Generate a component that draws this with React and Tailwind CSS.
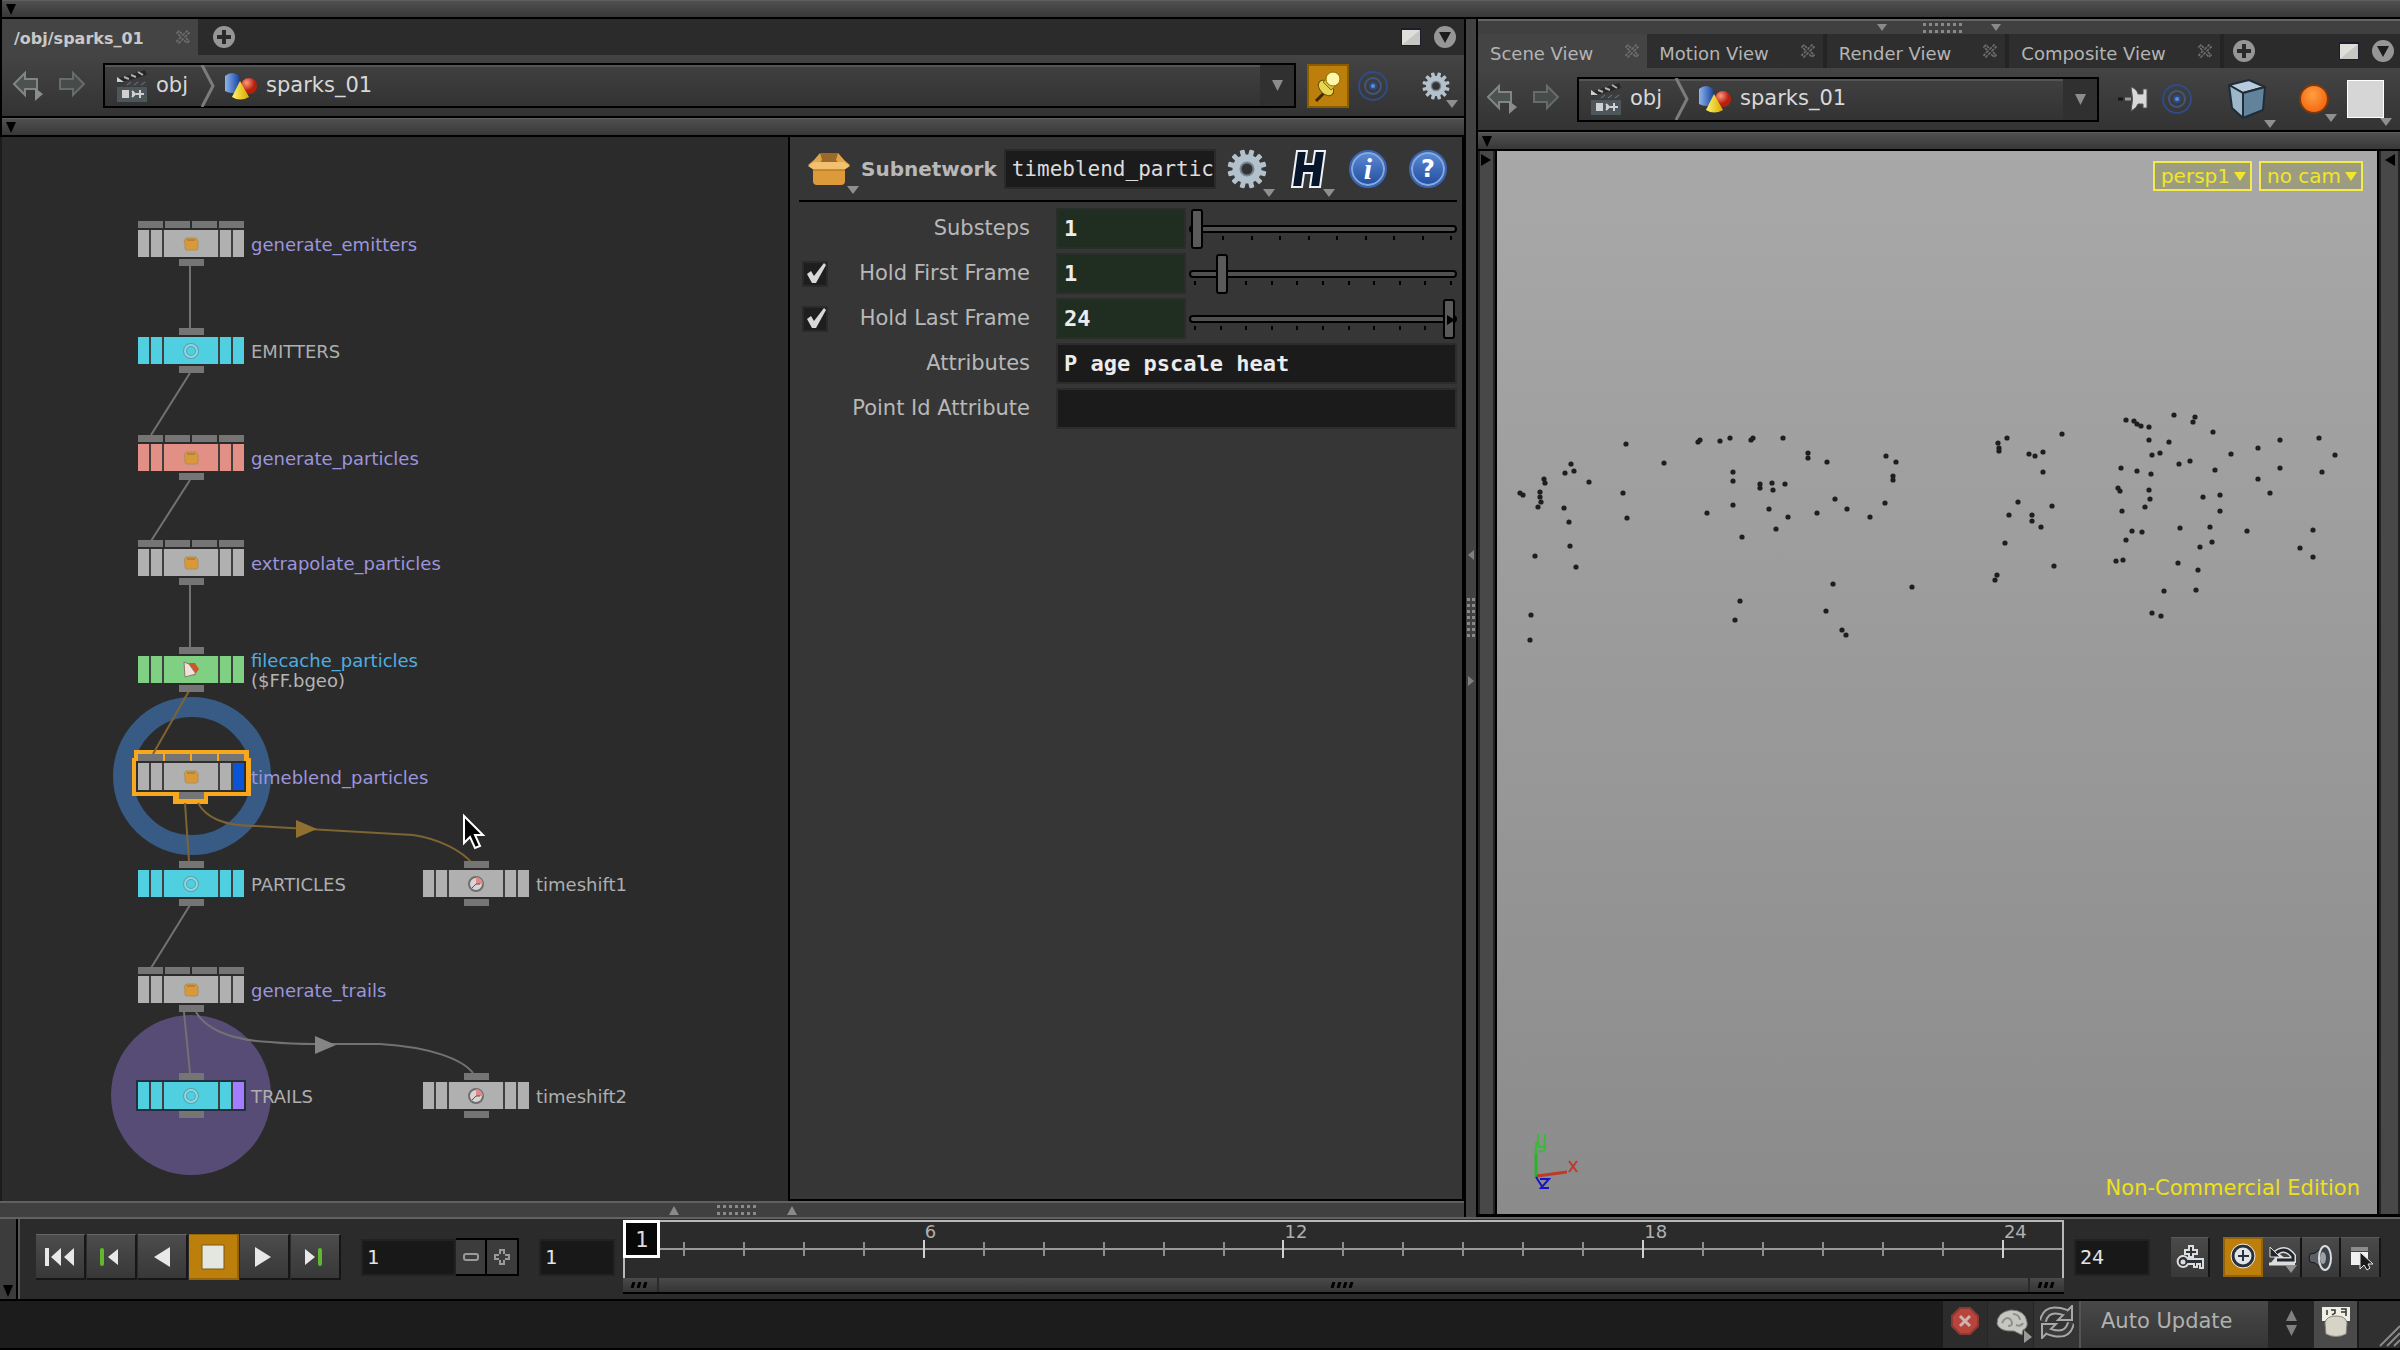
import { useState } from "react";
import clsx from "clsx";

const GRAY = "bg-[#b0b0b0]";
const CYAN = "bg-[#4fcfdf]";
const PINK = "bg-[#e28f85]";
const GREEN = "bg-[#7fd083]";

const PURPLE_TEXT = "text-[#9c95dc]";
const PLAIN_TEXT = "text-[#aeaeae]";

// x / y is the top left corner of a node on the network canvas
const nodes = [
  { name: "generate_emitters", x: 138, y: 84, inputs: 4, color: GRAY, icon: "box", text: PURPLE_TEXT },
  { name: "EMITTERS", x: 138, y: 191, inputs: 1, color: CYAN, icon: "null", text: PLAIN_TEXT },
  { name: "generate_particles", x: 138, y: 298, inputs: 4, color: PINK, icon: "box", text: PURPLE_TEXT },
  { name: "extrapolate_particles", x: 138, y: 403, inputs: 4, color: GRAY, icon: "box", text: PURPLE_TEXT },
  { name: "filecache_particles", x: 138, y: 510, inputs: 1, color: GREEN, icon: "file", text: "text-[#4fade0]", note: "($FF.bgeo)" },
  { name: "timeblend_particles", x: 138, y: 617, inputs: 4, color: GRAY, icon: "box", text: PURPLE_TEXT, flag: "bg-[#0a54d8]" },
  { name: "PARTICLES", x: 138, y: 724, inputs: 1, color: CYAN, icon: "null", text: PLAIN_TEXT },
  { name: "timeshift1", x: 423, y: 724, inputs: 1, color: GRAY, icon: "clock", text: PLAIN_TEXT },
  { name: "generate_trails", x: 138, y: 830, inputs: 4, color: GRAY, icon: "box", text: PURPLE_TEXT },
  { name: "TRAILS", x: 138, y: 936, inputs: 1, color: CYAN, icon: "null", text: PLAIN_TEXT, flag: "bg-[#a47cff]" },
  { name: "timeshift2", x: 423, y: 936, inputs: 1, color: GRAY, icon: "clock", text: PLAIN_TEXT },
];

const points = [
  [129, 293], [167, 312], [74, 313], [77, 320], [68, 322], [92, 331], [47, 328], [48, 332], [43, 341], [43, 346],
  [44, 351], [41, 356], [26, 344], [23, 342], [67, 357], [72, 371], [73, 395], [79, 416], [38, 405], [34, 464],
  [33, 489], [126, 342], [130, 367], [201, 291], [203, 289], [223, 290], [233, 287], [254, 289], [256, 287], [286, 287],
  [311, 302], [311, 307], [330, 311], [389, 305], [399, 311], [396, 325], [396, 329], [236, 321], [236, 330], [263, 333],
  [263, 337], [275, 332], [276, 339], [288, 333], [338, 348], [350, 358], [388, 352], [373, 366], [320, 362], [272, 358],
  [291, 366], [279, 378], [236, 354], [210, 362], [245, 386], [336, 433], [415, 436], [243, 450], [238, 469], [329, 460],
  [345, 479], [349, 484], [629, 269], [637, 270], [640, 273], [644, 275], [652, 276], [677, 264], [698, 266], [696, 271],
  [716, 281], [652, 289], [672, 291], [655, 304], [663, 302], [565, 283], [510, 287], [501, 292], [502, 297], [502, 300],
  [532, 303], [538, 305], [546, 301], [546, 321], [734, 303], [761, 297], [783, 289], [822, 287], [838, 304], [825, 321],
  [783, 317], [761, 328], [773, 342], [682, 313], [693, 310], [718, 319], [624, 317], [640, 320], [654, 323], [621, 337],
  [623, 340], [652, 339], [653, 348], [648, 356], [625, 360], [706, 346], [723, 344], [723, 360], [713, 376], [715, 391],
  [703, 396], [683, 377], [750, 380], [816, 379], [803, 397], [816, 406], [635, 380], [645, 381], [629, 389], [619, 410],
  [626, 409], [681, 412], [701, 419], [667, 440], [699, 439], [655, 462], [664, 465], [521, 351], [512, 364], [535, 364],
  [535, 370], [544, 376], [555, 355], [508, 392], [557, 415], [500, 424], [498, 429],
];

const Triangle = ({ dir = "down", className }) => {
  const paths = {
    down: "M0 0H12L6 12Z",
    up: "M0 12H12L6 0Z",
    right: "M0 0V12L12 6Z",
    left: "M12 0V12L0 6Z",
  };
  return (
    <svg viewBox="0 0 12 12" preserveAspectRatio="none" className={clsx("shrink-0 fill-current", className)}>
      <path d={paths[dir]} />
    </svg>
  );
};

const Dots = ({ vertical }) => (
  <svg width={vertical ? 8 : 40} height={vertical ? 40 : 12} className="shrink-0">
    {[0, 1, 2, 3, 4, 5, 6].map((i) => (
      <g key={i} fill="#8a8a8a">
        {vertical ? (
          <>
            <rect x="0" y={i * 6} width="3" height="3" />
            <rect x="5" y={i * 6} width="3" height="3" />
          </>
        ) : (
          <>
            <rect x={i * 6} y="1" width="3" height="3" />
            <rect x={i * 6} y="8" width="3" height="3" />
          </>
        )}
      </g>
    ))}
  </svg>
);

const StowBar = () => (
  <div className="flex h-[17px] items-center border-t border-[#5e5e5e] bg-linear-to-b from-[#505050] to-[#383838] pl-1">
    <Triangle className="h-[11px] w-[10px] text-black" />
  </div>
);

const CloseIcon = () => (
  <svg width="14" height="14" viewBox="0 0 14 14" fill="none" stroke="#6f6f6f" strokeWidth="1.6">
    <path d="M1 3 3 1 7 5 11 1 13 3 9 7 13 11 11 13 7 9 3 13 1 11 5 7Z" strokeDasharray="3 1" />
  </svg>
);

const PlusCircle = () => (
  <svg width="24" height="24" viewBox="0 0 24 24">
    <circle cx="12" cy="12" r="11" fill="#969696" />
    <path d="M12 5V19M5 12H19" stroke="#2a2a2a" strokeWidth="4" />
  </svg>
);

const MenuCircle = () => (
  <svg width="24" height="24" viewBox="0 0 24 24">
    <circle cx="12" cy="12" r="11" fill="#969696" />
    <path d="M6 7H18L12 18Z" fill="#1c1c1c" />
  </svg>
);

const PaneSquare = () => (
  <svg width="20" height="18" viewBox="0 0 20 18">
    <rect x="0" y="0" width="20" height="18" fill="#1e1c30" />
    <rect x="1" y="2" width="18" height="15" fill="#dededa" />
    <path d="M1 17H19V2Z" fill="#c6c6c2" />
  </svg>
);

const BackArrow = () => (
  <svg width="32" height="34" viewBox="0 0 32 34">
    <path d="M2 15 13 4V10H25V20H13V26Z" fill="#4c5250" stroke="#808684" strokeWidth="2" />
    <path d="M23 19V32L31 25Z" fill="#8c8c8c" />
  </svg>
);

const ForwardArrow = () => (
  <svg width="28" height="34" viewBox="0 0 28 34">
    <path d="M26 15 15 4V10H2V20H15V26Z" fill="#474c4a" stroke="#666c6a" strokeWidth="2" />
  </svg>
);

const ClapperIcon = () => (
  <svg width="32" height="34" viewBox="0 0 32 34">
    <path d="M1 10 29 1 31 6 3 14Z" fill="#262626" />
    <path d="M8 8 13 10M15 6 20 8M22 3 27 6" stroke="#b0b0b0" strokeWidth="2" />
    <path d="M1 8 8 13H1Z" fill="#cdd0d2" />
    <rect x="9" y="12" width="22" height="5" fill="#3b3f42" />
    <path d="M11 16 15 13M18 16 22 13M25 16 29 13" stroke="#777" strokeWidth="1" />
    <rect x="1" y="18" width="30" height="15" fill="#4d565b" />
    <path d="M7 22H12V28H7ZM16 22 19 25 16 28M24 21V29M20 25H28" fill="#d0d0d0" stroke="#d0d0d0" strokeWidth="2" />
  </svg>
);

const GeometryIcon = () => (
  <svg width="32" height="28" viewBox="0 0 32 28">
    <defs>
      <linearGradient id="cyl">
        <stop offset="0" stopColor="#8fb4ec" />
        <stop offset="1" stopColor="#1c49a0" />
      </linearGradient>
      <radialGradient id="ball" cx=".35" cy=".3">
        <stop offset="0" stopColor="#ff9a80" />
        <stop offset="1" stopColor="#b8200e" />
      </radialGradient>
      <linearGradient id="cone">
        <stop offset="0" stopColor="#fff46a" />
        <stop offset="1" stopColor="#d8a800" />
      </linearGradient>
    </defs>
    <path d="M0 4Q7-2 14 4V19Q7 23 0 19Z" fill="url(#cyl)" />
    <circle cx="24" cy="14" r="8" fill="url(#ball)" />
    <path d="M15 9 24 25Q15 30 7 25Z" fill="url(#cone)" />
  </svg>
);

const Chevron = () => (
  <svg width="16" height="42" viewBox="0 0 16 42" fill="none" stroke="#7c7c7c" strokeWidth="3">
    <path d="M2 0 13 21 2 42" />
  </svg>
);

const TargetIcon = () => (
  <svg width="32" height="32" viewBox="0 0 32 32" fill="none" stroke="#2e4c88" strokeWidth="2">
    <circle cx="16" cy="16" r="14" />
    <circle cx="16" cy="16" r="8" stroke="#40567e" />
    <circle cx="16" cy="16" r="3" fill="#5b8fd0" stroke="#2e4c88" />
  </svg>
);

const GearIcon = ({ size }) => (
  <svg width={size} height={size} viewBox="-20 -20 40 40">
    {[0, 30, 60, 90, 120, 150].map((a) => (
      <rect key={a} x="-2.5" y="-19.5" width="5" height="39" rx="1" fill="#b3c1cc" transform={`rotate(${a + 15})`} />
    ))}
    <circle r="14.5" fill="#b3c1cc" />
    <circle r="6.5" fill="#333" stroke="#75838e" strokeWidth="2" />
  </svg>
);

const PinOnIcon = () => (
  <svg width="30" height="36" viewBox="0 0 30 36">
    <path d="M3 33 12 24" stroke="#3a2a00" strokeWidth="3" />
    <ellipse cx="13" cy="20" rx="9" ry="6" transform="rotate(45 13 20)" fill="#e8d455" stroke="#6b5200" />
    <path d="M10 14 17 8 25 16 18 22Z" fill="#d6bd3c" stroke="#8a6e00" />
    <circle cx="20" cy="11" r="7" fill="#fff6a8" stroke="#8a6e00" />
  </svg>
);

const PinOffIcon = () => (
  <svg width="32" height="26" viewBox="0 0 32 26">
    <path d="M1 13H6" stroke="#161616" strokeWidth="3" />
    <path d="M8 13H14" stroke="#9a9a9a" strokeWidth="3" />
    <path d="M14 1Q17 13 14 25Q20 22 21 18H26V22H30V3H26V8H21Q20 3 14 1Z" fill="#d8d8d8" stroke="#555" />
  </svg>
);

const CubeIcon = () => (
  <svg width="42" height="42" viewBox="0 0 42 42" stroke="#202c36" strokeWidth="2" strokeLinejoin="round">
    <path d="M3 7 23 2 39 9 17 15Z" fill="#b7cbdc" />
    <path d="M3 7 17 15V40L6 30Z" fill="#9cb6ca" />
    <path d="M17 15 39 9 37 32 17 40Z" fill="#62839c" />
  </svg>
);

const BoxIcon = () => (
  <svg width="44" height="34" viewBox="0 0 44 34">
    <path d="M7 9 14 1H31L38 9 34 14H10Z" fill="#9a6a28" />
    <path d="M7 8 13 1 15 8 9 15 1 13ZM37 8 31 1 29 8 35 15 43 13Z" fill="#e0a64c" />
    <path d="M6 14H38V29Q38 33 34 33H10Q6 33 6 29Z" fill="#dd9a3a" />
    <path d="M1 14 7 10H37L43 14 37 18H7Z" fill="#f2c070" />
    <path d="M6 18H38" stroke="#b97a24" strokeWidth="1.5" />
  </svg>
);

const HoudiniIcon = () => (
  <svg width="38" height="40" viewBox="0 0 38 40">
    <path
      d="M8 2H18L16 15H24L26 2H36L31 38H21L23 24H15L13 38H3Z"
      fill="#06152a"
      stroke="#eef2f6"
      strokeWidth="2"
    />
  </svg>
);

const RoundBadge = ({ children }) => (
  <span className="flex size-[38px] items-center justify-center rounded-full border-2 border-[#3b64b0] bg-linear-to-b from-[#5f8cd4] to-[#1f4c9e] text-white shadow-[inset_0_0_0_2px_#86a8dc]">
    {children}
  </span>
);

const IconButton = ({ label, className, children }) => (
  <button type="button" aria-label={label} className={clsx("flex shrink-0 items-center justify-center", className)}>
    {children}
  </button>
);

const WithMenu = ({ children }) => (
  <span className="relative">
    {children}
    <Triangle className="absolute -right-2 -bottom-2 h-2 w-3 text-[#8f8f8f]" />
  </span>
);

const PathField = () => (
  <div className="flex h-[45px] min-w-0 flex-1 items-center border-2 border-black bg-linear-to-b from-[#404040] to-[#333] pl-[11px] text-[21px] text-[#d8d8d8] shadow-[inset_0_2px_0_#555]">
    <a href="#obj" className="flex items-center gap-2">
      <ClapperIcon />
      obj
    </a>
    <span className="ml-3">
      <Chevron />
    </span>
    <a href="#sparks_01" className="ml-[9px] flex items-center gap-[9px]">
      <GeometryIcon />
      sparks_01
    </a>
    <button type="button" aria-label="Path history" className="ml-auto flex h-full w-[34px] items-center justify-center bg-[#303030]">
      <Triangle className="h-[11px] w-[11px] text-[#8c8c8c]" />
    </button>
  </div>
);

const Tab = ({ title, active, bold }) => (
  <div
    className={clsx(
      "flex h-full items-center gap-8 pr-2 pl-3",
      active ? "bg-[#444]" : "border-r-4 border-[#242424] bg-[#2e2e2e]"
    )}
  >
    <button
      type="button"
      className={clsx(
        "pt-1 whitespace-nowrap",
        bold ? "text-[16px] font-bold text-[#c8c8c8]" : "text-[18px] text-[#b4b4b4]"
      )}
    >
      {title}
    </button>
    <button type="button" aria-label={`Close ${title}`}>
      <CloseIcon />
    </button>
  </div>
);

const NodeIcon = ({ type }) => {
  if (type === "box") {
    return (
      <svg width="18" height="18" viewBox="0 0 18 18">
        <path d="M2 6 4 3H14L16 6V13Q16 15 14 15H5Q3 15 3 13V8Z" fill="#d9993a" stroke="#a8905a" />
        <path d="M5 5H13" stroke="#9a6a28" />
      </svg>
    );
  }
  if (type === "null") {
    return (
      <svg width="18" height="18" viewBox="0 0 18 18">
        <circle cx="9" cy="9" r="6" fill="none" stroke="#5f9ea8" strokeWidth="4" />
        <circle cx="9" cy="9" r="6" fill="none" stroke="#86dbe4" strokeWidth="2" />
      </svg>
    );
  }
  if (type === "file") {
    return (
      <svg width="18" height="18" viewBox="0 0 18 18">
        <path d="M6 2H13L17 8 12 15Z" fill="#d0552a" />
        <path d="M2 1 7 3 14 13 3 16Z" fill="#efe4da" stroke="#8a7a6a" />
      </svg>
    );
  }
  return (
    <svg width="18" height="18" viewBox="0 0 18 18">
      <circle cx="9" cy="9" r="7" fill="#dcd4d4" stroke="#6e6e6e" strokeWidth="2" />
      <path d="M9 9V2A7 7 0 0 1 16 9Z" fill="#e08a8a" />
      <path d="M9 9 5 13M9 9H13" stroke="#555" />
    </svg>
  );
};

const Node = ({ node }) => (
  <div className="absolute flex items-center gap-[7px]" style={{ left: node.x, top: node.y }}>
    <div className="flex w-[106px] flex-col items-center gap-[2px]">
      <div className="flex w-full justify-center gap-[2px]">
        {Array.from({ length: node.inputs }).map((_, i) => (
          <span key={i} className="h-[7px] w-[25px] bg-[#757575]" />
        ))}
      </div>
      <div className="flex h-[27px] w-full gap-[2px] bg-[#404040]">
        <span className={clsx("w-[11px]", node.color)} />
        <span className={clsx("w-[11px]", node.color)} />
        <span className={clsx("flex flex-1 items-center justify-center", node.color)}>
          <NodeIcon type={node.icon} />
        </span>
        <span className={clsx("w-[11px]", node.color)} />
        <span className={clsx("w-[11px]", node.flag || node.color)} />
      </div>
      <span className="h-[7px] w-[25px] bg-[#757575]" />
    </div>
    <div className="flex flex-col pt-[3px] text-[18px] leading-5">
      <span className={node.text}>{node.name}</span>
      {node.note && <span className="text-[#b4b4b4]">{node.note}</span>}
    </div>
  </div>
);

const Network = () => (
  <div className="relative min-w-0 flex-[786] overflow-hidden border-l-2 border-[#1c1c1c] bg-[#2b2b2b]">
    <div className="absolute inset-y-0 -left-[2px] w-full">
      <svg className="absolute inset-0 h-full w-full" fill="none" strokeWidth="2">
        <circle cx="192" cy="639" r="69" stroke="#385b86" strokeWidth="20" />
        <circle cx="191" cy="958" r="80" fill="#564c75" />
        <path d="M134 613H249V621H251V659H208V667H173V659H132V621H134Z" fill="#f7a81e" />
        <rect x="136" y="624" width="110" height="31" fill="#2e2e2e" />
        <rect x="136" y="943" width="110" height="31" fill="#22303c" />
        <g stroke="#727272">
          <path d="M190 129V191M190 236 151 298M190 343 151 404M190 448V511M190 768 151 831M184 875 190 936" />
          <path d="M196 875C204 889 225 903 270 905 290 907 300 907 315 907H380C430 910 462 922 473 936" />
        </g>
        <g stroke="#7d6432">
          <path d="M189 554 153 617M185 666 189 725" />
          <path d="M198 666C206 680 222 689 256 689L413 698C440 702 462 714 473 727" />
        </g>
        <path d="M296 683 317 692 296 701Z" fill="#8f7030" />
        <path d="M315 899 336 908 315 917Z" fill="#858585" />
      </svg>
      {nodes.map((node) => (
        <Node key={node.name} node={node} />
      ))}
      <svg className="absolute top-[676px] left-[462px]" width="24" height="38" viewBox="0 0 24 38">
        <path d="M2 3V30L8 24 13 35 18 33 13 22H21Z" fill="#000" stroke="#fff" strokeWidth="2" />
      </svg>
    </div>
  </div>
);

const sliderClass =
  "absolute inset-x-0 top-0 m-0 h-10 w-full appearance-none bg-transparent " +
  "[&::-webkit-slider-runnable-track]:h-2 [&::-webkit-slider-runnable-track]:rounded-full [&::-webkit-slider-runnable-track]:border-2 [&::-webkit-slider-runnable-track]:border-black [&::-webkit-slider-runnable-track]:bg-[#505050] " +
  "[&::-webkit-slider-thumb]:-mt-[18px] [&::-webkit-slider-thumb]:h-10 [&::-webkit-slider-thumb]:w-3 [&::-webkit-slider-thumb]:appearance-none [&::-webkit-slider-thumb]:rounded-[3px] [&::-webkit-slider-thumb]:border-2 [&::-webkit-slider-thumb]:border-black [&::-webkit-slider-thumb]:bg-[#5a5a5a]";

const FrameRow = ({ id, label, value, slider, min, max, toggle }) => {
  const [checked, setChecked] = useState(true);
  const [pos, setPos] = useState(slider);
  return (
    <div className="flex h-[41px] items-center">
      {toggle && (
        <span className="relative ml-[3px] size-[26px]">
          <input
            type="checkbox"
            id={`${id}-on`}
            aria-label={`Enable ${label}`}
            checked={checked}
            onChange={(e) => setChecked(e.target.checked)}
            className="size-[26px] appearance-none border-2 border-[#2a2a2a] bg-[#1e1e1e]"
          />
          {checked && (
            <svg className="pointer-events-none absolute inset-0" width="26" height="26" viewBox="0 0 26 26">
              <path d="M5 13 9 10 12 15 22 2 24 4 14 22H10Z" fill="#d8d8d8" />
            </svg>
          )}
        </span>
      )}
      <label htmlFor={id} className="flex-1 pr-[26px] text-right text-[21px]">
        {label}
      </label>
      <input
        id={id}
        defaultValue={value}
        className="h-[41px] w-[130px] border-2 border-[#2a2e2a] bg-[#202e21] px-[6px] font-['DejaVu_Sans_Mono',monospace] text-[22px] font-bold text-[#ececec]"
      />
      <div className="relative ml-[3px] h-10 w-[268px]">
        <div className="flex h-full justify-between px-[5px] pt-[27px]">
          {Array.from({ length: max - min + 1 }).map((_, i) => (
            <span key={i} className="h-1 w-[2px] bg-black" />
          ))}
        </div>
        <input
          type="range"
          aria-label={`${label} slider`}
          min={min}
          max={max}
          value={pos}
          onChange={(e) => setPos(Number(e.target.value))}
          className={sliderClass}
        />
        {/* the value lies past the end of the slider */}
        {Number(value) > max && (
          <Triangle dir="right" className="pointer-events-none absolute top-4 right-[2px] h-[10px] w-2 text-black" />
        )}
      </div>
    </div>
  );
};

const TextRow = ({ id, label, value }) => (
  <div className="flex h-[41px] items-center">
    <label htmlFor={id} className="flex-1 pr-[26px] text-right text-[21px]">
      {label}
    </label>
    <input
      id={id}
      defaultValue={value}
      className="h-[41px] w-[401px] border-2 border-[#2c2c2c] bg-[#1b1b1b] px-[6px] font-['DejaVu_Sans_Mono',monospace] text-[22px] font-bold text-[#ececec]"
    />
  </div>
);

const Parameters = () => (
  <div className="min-w-0 flex-[658] border-x-2 border-b-2 border-black bg-[#363636] pr-[5px] pl-[9px] text-[#b8b8b8]">
    <div className="flex h-[65px] items-center border-b-2 border-black pl-2">
      <IconButton label="Operator type">
        <WithMenu>
          <BoxIcon />
        </WithMenu>
      </IconButton>
      <label htmlFor="op-name" className="ml-[10px] text-[20px] font-bold">
        Subnetwork
      </label>
      <input
        id="op-name"
        defaultValue="timeblend_particles"
        className="ml-[7px] h-10 w-[212px] min-w-0 border-2 border-[#2a2a2a] bg-[#1b1b1b] pl-[6px] font-['DejaVu_Sans_Mono',monospace] text-[21px] text-[#dcdcdc]"
      />
      <div className="ml-auto flex items-center gap-[22px] pr-[10px]">
        <IconButton label="Gear menu">
          <WithMenu>
            <GearIcon size={40} />
          </WithMenu>
        </IconButton>
        <IconButton label="Houdini menu">
          <WithMenu>
            <HoudiniIcon />
          </WithMenu>
        </IconButton>
        <IconButton label="Info">
          <RoundBadge>
            <span className="font-['Liberation_Serif',serif] text-[30px] leading-8 font-bold italic">i</span>
          </RoundBadge>
        </IconButton>
        <IconButton label="Help">
          <RoundBadge>
            <span className="text-[24px] leading-8 font-bold">?</span>
          </RoundBadge>
        </IconButton>
      </div>
    </div>
    <div className="flex flex-col gap-1 pt-[6px]">
      <FrameRow id="substeps" label="Substeps" value="1" slider={1} min={1} max={10} />
      <FrameRow id="hold-first" label="Hold First Frame" value="1" slider={1} min={0} max={10} toggle />
      <FrameRow id="hold-last" label="Hold Last Frame" value="24" slider={10} min={0} max={10} toggle />
      <TextRow id="attributes" label="Attributes" value="P age pscale heat" />
      <TextRow id="point-id" label="Point Id Attribute" value="" />
    </div>
  </div>
);

const LeftPane = () => (
  <section className="flex min-w-0 flex-[1464] flex-col">
    <div className="ml-[2px] flex h-[36px] items-center bg-[#2b2b2b]">
      <Tab title="/obj/sparks_01" active bold />
      <IconButton label="New tab" className="ml-[14px]">
        <PlusCircle />
      </IconButton>
      <div className="ml-auto flex items-center gap-3 pr-[7px]">
        <IconButton label="Maximize pane">
          <PaneSquare />
        </IconButton>
        <IconButton label="Pane menu">
          <MenuCircle />
        </IconButton>
      </div>
    </div>
    <div className="ml-[2px] flex h-[61px] items-center bg-linear-to-b from-[#444] to-[#333] pr-3 pl-[10px]">
      <IconButton label="Back">
        <BackArrow />
      </IconButton>
      <IconButton label="Forward" className="mr-[17px] ml-[14px]">
        <ForwardArrow />
      </IconButton>
      <PathField />
      <IconButton label="Pin" className="ml-[11px] h-[44px] w-[42px] border-2 border-[#8a5c00] bg-[#bd7f0c]">
        <PinOnIcon />
      </IconButton>
      <IconButton label="Follow selection" className="ml-2">
        <TargetIcon />
      </IconButton>
      <IconButton label="Network options" className="mr-[2px] ml-[33px]">
        <WithMenu>
          <GearIcon size={28} />
        </WithMenu>
      </IconButton>
    </div>
    <div className="ml-[2px] border-y-2 border-black">
      <StowBar />
    </div>
    <div className="flex min-h-0 flex-1">
      <Network />
      <Parameters />
    </div>
    <div className="flex h-4 items-center gap-[38px] border-t-2 border-[#606060] bg-[#404040] pl-[669px] text-[#8a8a8a]">
      <Triangle dir="up" className="h-[9px] w-[10px]" />
      <Dots />
      <Triangle dir="up" className="-ml-2 h-[9px] w-[10px]" />
    </div>
  </section>
);

const SceneView = () => (
  <div className="relative min-w-0 flex-1 overflow-hidden border-x-2 border-black bg-linear-to-b from-[#a8a8a8] via-[#9a9a9a] to-[#8b8b8b]">
    <svg className="absolute inset-0 h-full w-full">
      {points.map(([x, y], i) => (
        <circle key={i} cx={x} cy={y} r="2.6" fill="#1e1e1e" />
      ))}
    </svg>
    <div className="absolute top-[10px] right-[14px] flex gap-[7px] text-[20px] leading-[26px] text-[#f0e62c]">
      <button type="button" className="flex items-center gap-1 border-2 border-[#f4ea4c] bg-[#9c9c80] pr-1 pl-[6px]">
        persp1
        <Triangle className="h-[9px] w-3" />
      </button>
      <button type="button" className="flex items-center gap-1 border-2 border-[#f4ea4c] bg-[#9c9c80] pr-1 pl-[6px]">
        no cam
        <Triangle className="h-[9px] w-3" />
      </button>
    </div>
    <svg className="absolute bottom-[20px] left-[30px]" width="56" height="64" viewBox="0 0 56 64" fill="none" strokeWidth="3">
      <path d="M9 47V20" stroke="#28b428" />
      <path d="M11 4V14Q11 17 15 17 18 17 18 14V4M18 12V19Q18 22 12 21M9 12V24" stroke="#3cb83c" strokeWidth="2" />
      <path d="M10 46 40 42" stroke="#c0392b" />
      <path d="M42 31 50 42M50 31 42 42" stroke="#c0392b" strokeWidth="2" />
      <path d="M9 47 16 58M13 49H22L14 58H22" stroke="#1414c8" strokeWidth="2" />
    </svg>
    <p className="absolute right-[17px] bottom-[12px] text-[21px] leading-7 text-[#eee01c]">Non-Commercial Edition</p>
  </div>
);

const RightPane = () => (
  <section className="flex min-w-0 flex-[922] flex-col">
    <div className="flex h-[15px] items-center justify-center gap-[36px] border-t-2 border-[#666] bg-[#404040] text-[#8a8a8a]">
      <Triangle className="h-[7px] w-[10px]" />
      <Dots />
      <Triangle className="-ml-2 h-[7px] w-[10px]" />
    </div>
    <div className="flex h-[34px] items-center bg-[#2b2b2b]">
      <Tab title="Scene View" active />
      <Tab title="Motion View" />
      <Tab title="Render View" />
      <Tab title="Composite View" />
      <IconButton label="New tab" className="ml-2">
        <PlusCircle />
      </IconButton>
      <div className="ml-auto flex items-center gap-3 pr-[5px]">
        <IconButton label="Maximize pane">
          <PaneSquare />
        </IconButton>
        <IconButton label="Pane menu">
          <MenuCircle />
        </IconButton>
      </div>
    </div>
    <div className="flex h-[62px] items-center bg-linear-to-b from-[#444] to-[#333] pr-[16px] pl-2">
      <IconButton label="Back">
        <BackArrow />
      </IconButton>
      <IconButton label="Forward" className="mr-[17px] ml-[14px]">
        <ForwardArrow />
      </IconButton>
      <PathField />
      <IconButton label="Pin" className="ml-[18px]">
        <PinOffIcon />
      </IconButton>
      <IconButton label="Follow selection" className="ml-[12px]">
        <TargetIcon />
      </IconButton>
      <IconButton label="Display cube" className="ml-[33px]">
        <WithMenu>
          <CubeIcon />
        </WithMenu>
      </IconButton>
      <IconButton label="Shading" className="ml-[31px]">
        <WithMenu>
          <span className="block size-[30px] rounded-full border-2 border-[#7a3a10] bg-radial-[at_45%_35%] from-[#ffa040] to-[#f25400]" />
        </WithMenu>
      </IconButton>
      <IconButton label="Background" className="ml-[18px]">
        <WithMenu>
          <span className="block h-[38px] w-[37px] border border-white bg-[#d6d6d6]" />
        </WithMenu>
      </IconButton>
    </div>
    <div className="border-y-2 border-black">
      <StowBar />
    </div>
    <div className="flex min-h-0 flex-1 border-b-[3px] border-black">
      <div className="w-[17px] border-x-2 border-[#222] bg-[#484848] pt-[3px] pl-px">
        <Triangle dir="right" className="h-[12px] w-[10px] text-black" />
      </div>
      <SceneView />
      <div className="w-[21px] border-x-2 border-[#222] bg-[#484848] pt-[3px] pl-1">
        <Triangle dir="left" className="h-[12px] w-[10px] text-black" />
      </div>
    </div>
  </section>
);

const transport = [
  { label: "First frame", icon: <path d="M1 3H5V21H1ZM17 3V21L7 12ZM30 3V21L20 12Z" fill="#e8e8e8" /> },
  {
    label: "Previous keyframe",
    icon: (
      <>
        <rect x="5" y="3" width="4" height="18" rx="2" fill="#5fb82e" />
        <path d="M23 4V20L13 12Z" fill="#e8e8e8" />
      </>
    ),
  },
  { label: "Play backward", icon: <path d="M24 2V22L8 12Z" fill="#e8e8e8" /> },
  { label: "Stop", on: true, icon: <path d="M5 0H27V24H5Z" fill="#e4e6e0" stroke="#7a5a10" /> },
  { label: "Play forward", icon: <path d="M7 2V22L23 12Z" fill="#e8e8e8" /> },
  {
    label: "Next keyframe",
    icon: (
      <>
        <path d="M6 4V20L16 12Z" fill="#e8e8e8" />
        <rect x="19" y="3" width="4" height="18" rx="2" fill="#5fb82e" />
      </>
    ),
  },
];

const frameInput =
  "h-[37px] border-2 border-[#222] bg-[#181818] px-1 font-['DejaVu_Sans_Mono',monospace] text-[20px] text-[#e4e4e4]";
const toolButton = "h-10 border-t border-r-2 border-[#5a5a5a] border-r-[#141414] bg-linear-to-b from-[#4a4a4a] to-[#383838]";

const Slashes = ({ count }) => (
  <svg width={count * 6 + 3} height="6" stroke="#000" strokeWidth="3">
    {Array.from({ length: count }).map((_, i) => (
      <path key={i} d={`M${i * 6 + 2} 6 ${i * 6 + 4} 0`} />
    ))}
  </svg>
);

const Timeline = () => (
  <div className="h-[74px] min-w-0 flex-1">
    <div className="relative h-[58px] border-t-2 border-r-2 border-l-2 border-[#b8b8b8]">
      <div className="absolute inset-x-0 top-[26px] h-[2px] bg-[#9a9a9a]" />
      <div className="-ml-[2px] flex h-full">
        {Array.from({ length: 24 }).map((_, i) => {
          const frame = i + 1;
          const major = frame % 6 === 0;
          return (
            <div key={frame} className="relative min-w-0 flex-1">
              {major && <span className="block pl-[2px] text-[18px] leading-5 text-[#b0b0b0]">{frame}</span>}
              {frame > 1 && (
                <span
                  className={clsx(
                    "absolute left-0 w-[2px]",
                    major ? "top-[18px] h-[18px] bg-[#d0d0d0]" : "top-5 h-[14px] bg-[#8e8e8e]"
                  )}
                />
              )}
            </div>
          );
        })}
      </div>
      <span className="absolute -top-[2px] -left-[2px] flex h-[38px] w-[37px] items-center justify-center border-[3px] border-white bg-[#080808] font-['DejaVu_Sans_Mono',monospace] text-[22px] text-[#dcdcdc]">
        1
      </span>
    </div>
    <div className="flex h-[16px] items-center justify-between border-b-2 border-black bg-linear-to-b from-[#4a4a4a] to-[#343434]">
      <span className="flex h-full w-[36px] items-center justify-center border-r-2 border-[#2a2a2a]">
        <Slashes count={3} />
      </span>
      <Slashes count={4} />
      <span className="flex h-full w-[36px] items-center justify-center border-l-2 border-[#2a2a2a]">
        <Slashes count={3} />
      </span>
    </div>
  </div>
);

const Playbar = () => (
  <div className="flex h-[82px] items-stretch border-t-2 border-[#626262] bg-[#2b2b2b]">
    <div className="flex w-[18px] items-end justify-center border-r-2 border-black bg-[#3c3c3c] pb-[2px]">
      <Triangle className="h-[12px] w-[10px] text-black" />
    </div>
    <div className="flex min-w-0 flex-1 items-center border-l-2 border-[#555] pr-[19px] pb-1 pl-[16px]">
      <div className="flex gap-px">
        {transport.map((t) => (
          <button
            key={t.label}
            type="button"
            aria-label={t.label}
            className={clsx(
              "flex h-[46px] w-[50px] items-center justify-center border-t border-r-2 border-b-2",
              t.on ? "border-[#94630a] bg-[#bd7f0c]" : "border-[#161616] border-t-[#666] bg-linear-to-b from-[#4c4c4c] to-[#383838]"
            )}
          >
            <svg width="32" height="28" viewBox="0 -2 32 28">
              {t.icon}
            </svg>
          </button>
        ))}
      </div>
      <input aria-label="Current frame" defaultValue="1" className={clsx(frameInput, "ml-[20px] w-[95px]")} />
      <IconButton label="Previous frame" className="h-[38px] w-[31px] border-y-2 border-r-2 border-black bg-[#3c3c3c]">
        <svg width="16" height="8" fill="none" stroke="#9a9a9a" strokeWidth="2">
          <rect x="1" y="1" width="14" height="6" rx="2" />
        </svg>
      </IconButton>
      <IconButton label="Next frame" className="h-[38px] w-[32px] border-y-2 border-r-2 border-black bg-[#3c3c3c]">
        <svg width="16" height="16" fill="none" stroke="#9a9a9a" strokeWidth="2">
          <path d="M6 5V1H10V5M11 6H15V10H11M10 11V15H6V11M5 10H1V6H5" />
        </svg>
      </IconButton>
      <input aria-label="Range start" defaultValue="1" className={clsx(frameInput, "mr-2 ml-[20px] w-[76px]")} />
      <Timeline />
      <input aria-label="Range end" defaultValue="24" className={clsx(frameInput, "ml-[10px] w-[76px]")} />
      <IconButton label="Set keyframe" className={clsx(toolButton, "ml-[21px] w-[39px]")}>
        <svg width="28" height="28" viewBox="0 0 28 28" fill="#2c3238" stroke="#dcdcdc" strokeWidth="2">
          <path d="M13 2H17V6H21V10H17V13H13V10H9V6H13Z" />
          <path d="M12 15H27V24H24V20H21V23H18V20H12A5.5 5.5 0 1 1 12 15Z" />
          <circle cx="7" cy="18" r="1.5" fill="#dcdcdc" />
        </svg>
      </IconButton>
      <IconButton label="Real time" className="ml-[13px] h-10 w-[40px] border-2 border-[#94630a] bg-[#bd7f0c]">
        <svg width="28" height="28" viewBox="0 0 28 28">
          <circle cx="14" cy="13" r="10" fill="#dfe4e8" stroke="#27303c" strokeWidth="3" />
          <circle cx="14" cy="13" r="12" fill="none" stroke="#e8e8e8" strokeWidth="1" />
          <path d="M14 7V18M9 13H20" stroke="#27303c" strokeWidth="2" />
        </svg>
      </IconButton>
      <IconButton label="Loop mode" className={clsx(toolButton, "w-[39px]")}>
        <svg width="30" height="30" viewBox="0 0 30 30" fill="none">
          <path d="M6 13Q17 1 26 13V17H10L14 12" stroke="#dcdcdc" strokeWidth="6" />
          <path d="M6 13Q17 1 26 13V17H10" stroke="#20262c" strokeWidth="3" />
          <path d="M3 4V14H13Z" fill="#20262c" stroke="#dcdcdc" />
          <path d="M2 21H28" stroke="#dcdcdc" strokeWidth="3" />
          <path d="M18 22H30L24 30Z" fill="#909090" />
        </svg>
      </IconButton>
      <IconButton label="Audio" className={clsx(toolButton, "w-[39px]")}>
        <svg width="28" height="28" viewBox="0 0 28 28">
          <path d="M3 10Q1 14 3 18L8 19 17 26V2L8 9Z" fill="#5a6066" stroke="#15181a" />
          <ellipse cx="18" cy="14" rx="6" ry="12" fill="#3a4148" stroke="#dcdcdc" strokeWidth="2" />
          <ellipse cx="16" cy="14" rx="3" ry="6" fill="#9aa2a8" />
        </svg>
      </IconButton>
      <IconButton label="Playbar options" className={clsx(toolButton, "w-[40px]")}>
        <svg width="28" height="28" viewBox="0 0 28 28">
          <rect x="5" y="3" width="17" height="4" fill="#8c8c8c" />
          <rect x="5" y="8" width="17" height="13" fill="#f0f0f0" />
          <path d="M14 8V25L18 21 21 26 24 24 22 20H27Z" fill="#1a1a1a" stroke="#e8e8e8" />
        </svg>
      </IconButton>
    </div>
  </div>
);

const StatusBar = () => (
  <div className="flex h-[51px] items-stretch border-y-2 border-black bg-[#1c1c1c]">
    <div className="flex-1" />
    <IconButton label="Interrupt" className="w-[44px] bg-[#2c2c2c] pb-2">
      <svg width="28" height="28" viewBox="0 0 28 28">
        <path d="M9 1H19L27 9V19L19 27H9L1 19V9Z" fill="#b8443c" stroke="#8a3a34" strokeWidth="2" />
        <path d="M9 9 19 19M19 9 9 19" stroke="#cdb4b0" strokeWidth="3" />
      </svg>
    </IconButton>
    <IconButton label="Cook" className="w-[46px] border-l border-[#262626] bg-[#2f2f2f] pl-1">
      <svg width="38" height="38" viewBox="0 0 38 38">
        <path d="M3 18Q3 6 17 4 31 4 33 16 34 22 29 24L28 29 20 25Q6 26 3 18Z" fill="#c6c6c0" stroke="#777" />
        <path d="M8 17Q12 9 17 14 20 20 14 20M19 8Q25 8 26 14M22 19Q27 21 29 17" fill="none" stroke="#90908a" strokeWidth="2" />
        <path d="M30 24V37L38 31Z" fill="#999" />
      </svg>
    </IconButton>
    <IconButton label="Recook" className="w-[46px] border-l border-[#262626] bg-[#343434] pb-[6px]">
      <svg width="34" height="34" viewBox="0 0 34 34" fill="none">
        <path d="M3 16Q6 3 20 6L27 8M31 18Q28 31 14 28L7 26" stroke="#a8a8a8" strokeWidth="8" />
        <path d="M32 1V15H18ZM2 33V19H16Z" fill="#3a3a3a" stroke="#a8a8a8" strokeWidth="2" />
        <path d="M3 16Q6 3 20 6L27 8M31 18Q28 31 14 28L7 26" stroke="#3a3a3a" strokeWidth="4" />
      </svg>
    </IconButton>
    <select
      aria-label="Update mode"
      defaultValue="auto"
      className="w-[189px] appearance-none border-l-2 border-[#555] bg-linear-to-b from-[#484848] to-[#353535] pb-[6px] pl-5 text-[21px] text-[#b0b0b0]"
    >
      <option value="auto">Auto Update</option>
      <option value="mouse">On Mouse Up</option>
      <option value="manual">Manual</option>
    </select>
    <div className="flex w-[46px] flex-col items-center justify-center gap-1 bg-[#262626] pb-1 text-[#808080]">
      <Triangle dir="up" className="h-[11px] w-[11px]" />
      <Triangle className="h-[11px] w-[11px]" />
    </div>
    <IconButton label="Performance" className="w-[43px] bg-[#4a4a4a] pb-[6px]">
      <svg width="30" height="32" viewBox="0 0 30 32">
        <rect x="1" y="1" width="28" height="14" fill="#f0efe4" />
        <path d="M6 4V9M10 4H14V7L11 9M20 3H25V10M20 6H25" stroke="#333" strokeWidth="1.5" fill="none" />
        <path d="M4 17Q5 10 15 10T26 17L25 28Q15 33 5 28Z" fill="#d6d4c6" stroke="#8a887c" />
      </svg>
    </IconButton>
    <div className="ml-[2px] flex w-[41px] items-end justify-end bg-[#303030]">
      <svg width="22" height="24" stroke="#8a8a8a" strokeWidth="2">
        <path d="M2 22 22 2M9 22 22 9M16 22 22 16" />
      </svg>
    </div>
  </div>
);

const App = () => (
  <div className="flex min-h-screen flex-col bg-black font-['DejaVu_Sans',sans-serif] text-[#b8b8b8]">
    <div className="mb-[2px] ml-[2px] h-[17px]">
      <StowBar />
    </div>
    <main className="flex flex-1">
      <LeftPane />
      <div className="mr-[2px] flex w-3 flex-col items-center justify-center gap-[38px] border-l-2 border-black bg-[#424242] text-[#808080]">
        <Triangle dir="left" className="h-[10px] w-[6px]" />
        <Dots vertical />
        <Triangle dir="right" className="h-[10px] w-[6px]" />
      </div>
      <RightPane />
    </main>
    <Playbar />
    <StatusBar />
  </div>
);

export default App;
